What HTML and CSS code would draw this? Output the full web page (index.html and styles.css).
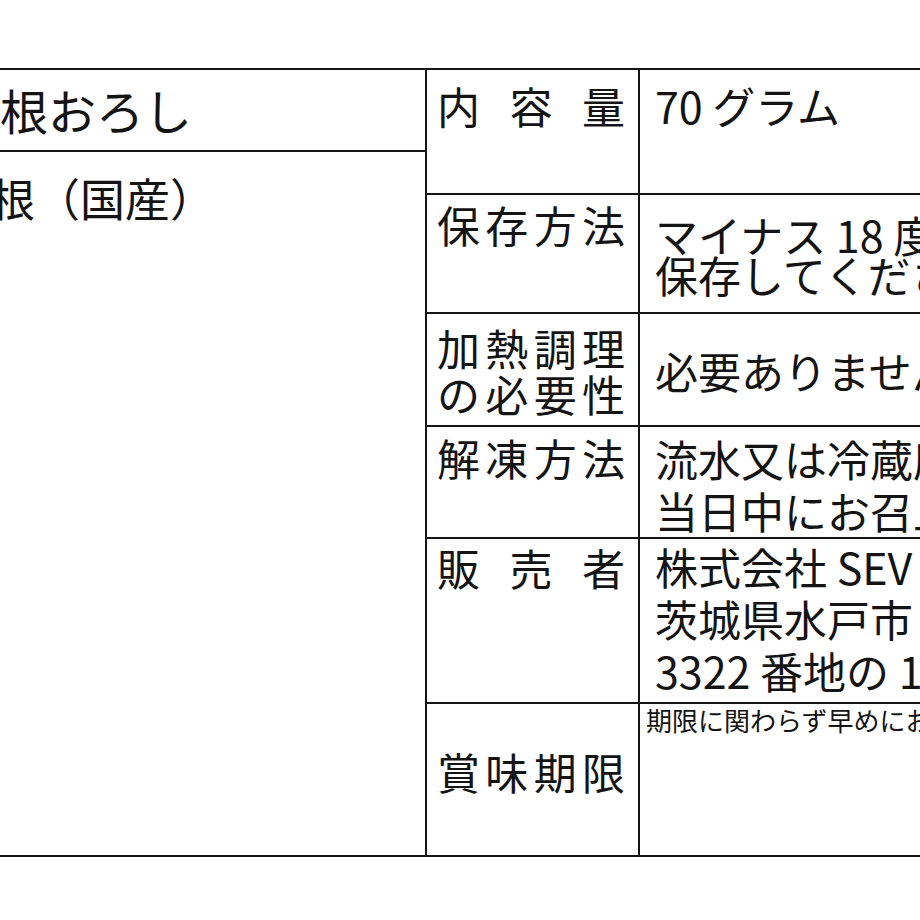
FILE: index.html
```html
<!DOCTYPE html>
<html lang="ja">
<head>
<meta charset="utf-8">
<title>大根おろし 表示</title>
<link rel="stylesheet" href="styles.css">
</head>
<body>
<div class="sheet">
  <div class="left">
    <div class="lcell name">大根おろし</div>
    <div class="lcell ingr">大根（国産）</div>
  </div>
  <div class="right">
    <div class="k r1"><span class="kt">内容量</span></div>
    <div class="v r1">70 グラム</div>

    <div class="k r2"><span class="kt">保存方法</span></div>
    <div class="v r2">マイナス 18 度以下で<br>保存してください。</div>

    <div class="k r3"><span class="kt">加熱調理<br>の必要性</span></div>
    <div class="v r3">必要ありません。</div>

    <div class="k r4"><span class="kt">解凍方法</span></div>
    <div class="v r4">流水又は冷蔵庫で解凍し、<br>当日中にお召上がりください。</div>

    <div class="k r5"><span class="kt">販売者</span></div>
    <div class="v r5">株式会社 SEV<br>茨城県水戸市<br>3322 番地の 1</div>

    <div class="k r6 last"><span class="kt">賞味期限</span></div>
    <div class="v r6 last">期限に関わらず早めにお召し上がりください。</div>
  </div>
</div>
</body>
</html>
```

FILE: styles.css
```css
html, body {
  margin: 0;
  padding: 0;
  overflow: hidden;
  background: #ffffff;
}

body {
  font-family: "Noto Sans CJK JP", "Noto Sans", sans-serif;
  color: #141414;
}

.sheet {
  display: flex;
  box-sizing: border-box;
  margin: 68px 0 0 -100px;
  width: 1300px;
  height: 789px;
  border-top: 2px solid #141414;
  border-bottom: 2px solid #141414;
}

.left {
  flex: none;
  box-sizing: border-box;
  width: 527px;
  border-right: 2px solid #141414;
  display: flex;
  flex-direction: column;
}

.lcell {
  box-sizing: border-box;
  white-space: nowrap;
  line-height: 1;
}

.name {
  height: 82px;
  border-bottom: 2px solid #141414;
  display: flex;
  align-items: center;
  padding-left: 52px;
  padding-bottom: 2px;
  font-size: 48px;
}

.ingr {
  flex: 1;
  padding: 23px 0 0 45px;
  font-size: 45px;
}

.right {
  flex: 1;
  display: grid;
  grid-template-columns: 213px 1fr;
  grid-template-rows: 125px 119px 113px 112px 165px 151px;
}

.k {
  box-sizing: border-box;
  border-right: 2px solid #141414;
  border-bottom: 2px solid #141414;
  padding: 0 13px 0 10px;
  font-size: 43px;
  line-height: 42px;
}

.kt {
  display: block;
  width: 188px;
  text-align: justify;
  text-align-last: justify;
}

.v {
  box-sizing: border-box;
  border-bottom: 2px solid #141414;
  padding: 0 0 0 15px;
  font-size: 43px;
  line-height: 42px;
  white-space: nowrap;
  overflow: hidden;
}

.last {
  border-bottom: none;
}

.k.r1 { padding-top: 14px; }
.v.r1 { padding-top: 14px; }

.k.r2 { padding-top: 8px; }
.v.r2 { padding-top: 19px; line-height: 40px; }

.k.r3 {
  display: flex;
  align-items: center;
  line-height: 46px;
}
.v.r3 {
  display: flex;
  align-items: center;
}

.k.r4 { padding-top: 9px; }
.v.r4 { padding-top: 5px; line-height: 52px; }

.k.r5 { padding-top: 7px; }
.v.r5 { padding-top: 1px; line-height: 52px; }

.k.r6 { padding-top: 46px; }
.v.r6 {
  padding-top: 1px;
  padding-left: 6px;
  font-size: 26px;
  line-height: 30px;
}
```
